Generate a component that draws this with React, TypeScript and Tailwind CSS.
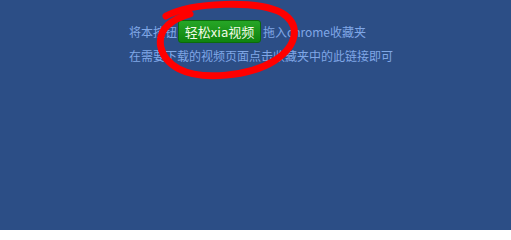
export default function App() {
  return (
    <div
      className="relative h-[230px] w-[511px] overflow-hidden bg-[#2c4e86] text-[12px] text-[#80a7e6]"
      style={{ fontFamily: '"Noto Sans CJK SC", "Noto Sans", sans-serif' }}
    >
      <div className="pl-[129px] pt-[20px]">
        <div className="flex h-[23px] items-center">
          <span>将本按钮</span>
          <a
            href="#"
            className="ml-[1px] flex h-[23px] w-[83px] items-center justify-center rounded-[3px] border border-[#0c6a0c] bg-gradient-to-b from-[#26a626] to-[#0f840f] text-[13px] text-[#f4fbe8]"
          >
            轻松xia视频
          </a>
          <span className="ml-[2px]">拖入chrome收藏夹</span>
        </div>
        <div className="mt-[4px] leading-[18px]">在需要下载的视频页面点击收藏夹中的此链接即可</div>
      </div>

      {/* red marker scribble drawn over the button */}
      <svg className="pointer-events-none absolute left-0 top-0" width="511" height="230">
        <path
          d="M166 16 C 192 2, 258 0, 282 13 C 300 24, 299 45, 274 61 C 250 76, 202 81, 179 69 C 157 57, 156 36, 168 25 C 175 19, 183 16, 190 14"
          fill="none"
          stroke="#ff0000"
          strokeWidth="7"
          strokeLinecap="round"
        />
      </svg>
    </div>
  );
}
